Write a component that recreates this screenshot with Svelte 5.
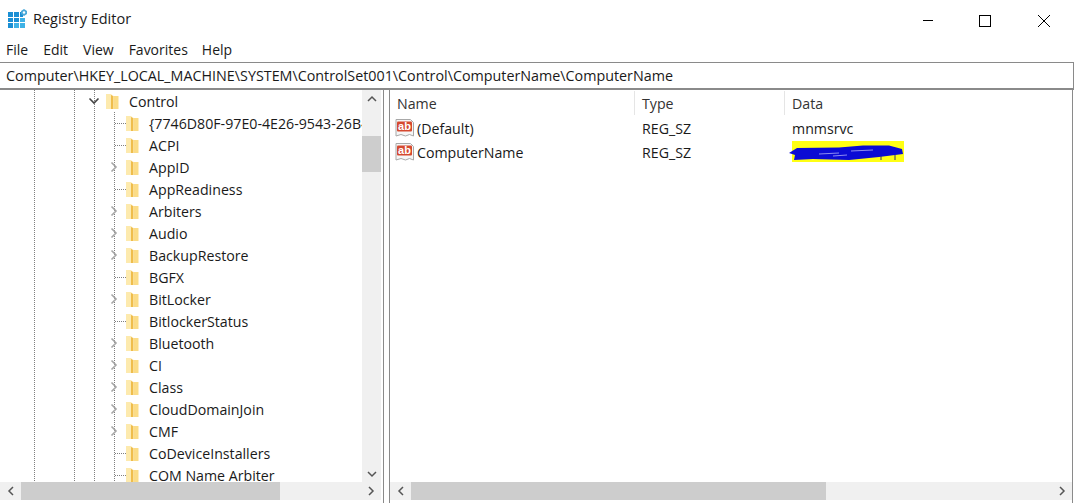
<script lang="ts">
  const items = [
    { name: "{7746D80F-97E0-4E26-9543-26B41FC22F79}", kids: false },
    { name: "ACPI", kids: false },
    { name: "AppID", kids: true },
    { name: "AppReadiness", kids: false },
    { name: "Arbiters", kids: true },
    { name: "Audio", kids: true },
    { name: "BackupRestore", kids: true },
    { name: "BGFX", kids: false },
    { name: "BitLocker", kids: true },
    { name: "BitlockerStatus", kids: false },
    { name: "Bluetooth", kids: true },
    { name: "CI", kids: true },
    { name: "Class", kids: true },
    { name: "CloudDomainJoin", kids: true },
    { name: "CMF", kids: true },
    { name: "CoDeviceInstallers", kids: false },
    { name: "COM Name Arbiter", kids: false },
  ];
  const values = [
    { name: "(Default)", type: "REG_SZ", data: "mnmsrvc" },
    { name: "ComputerName", type: "REG_SZ", data: "" },
  ];
  const menus = ["File", "Edit", "View", "Favorites", "Help"];
</script>

{#snippet folder()}
  <svg class="folder" viewBox="0 0 13 16" width="13" height="16">
    <path d="M0 1h5l1 1v14H0z" fill="#fdeaae" />
    <path d="M5 2l2.500 1v13H5z" fill="#efbd4c" />
    <path d="M7.500 3H12.500v13H7.500z" fill="#fbdc86" />
  </svg>
{/snippet}

{#snippet regIcon()}
  <svg class="reg" viewBox="0 0 19 20" width="19" height="20">
    <path d="M1 1.500h14.500l3 3v13.500l-4-1.500-4 1.500-4.500-1.500-5 1.500z" fill="#f6f6f6" stroke="#a8a8a8" />
    <rect x="2" y="3.500" width="15" height="10" rx="1" fill="#d5492f" />
    <text x="9.500" y="12" class="ab">ab</text>
  </svg>
{/snippet}

<div class="window">
  <header class="title">
    <svg class="logo" viewBox="0 0 20 20" width="20" height="20">
      <g fill="#1b8fd4">
        <rect x="0" y="4" width="5" height="5" />
        <rect x="6" y="4" width="5" height="5" />
        <rect x="12" y="4" width="3" height="5" />
        <rect x="0" y="10" width="5" height="4" />
        <rect x="6" y="10" width="5" height="4" />
        <rect x="12" y="10" width="5" height="4" fill="#3fb2e6" />
        <rect x="0" y="15" width="5" height="5" />
        <rect x="6" y="15" width="5" height="5" fill="#3fb2e6" />
        <rect x="12" y="15" width="5" height="5" fill="#3fb2e6" />
      </g>
      <path d="M16 1l3 2v3l-3 2-3-2V3z" fill="#4aa8d8" />
      <circle cx="16" cy="4.500" r="1.200" fill="#fff" />
    </svg>
    <span class="title-text">Registry Editor</span>
    <div class="controls">
      <svg viewBox="0 0 46 30" width="46" height="30"><path d="M18 17.500h10" stroke="#000" /></svg>
      <svg viewBox="0 0 46 30" width="46" height="30"><rect x="16.500" y="12.500" width="11" height="11" fill="none" stroke="#000" /></svg>
      <svg viewBox="0 0 46 30" width="46" height="30"><path d="M17 12l12 12M29 12L17 24" stroke="#000" fill="none" /></svg>
    </div>
  </header>

  <nav class="menu">
    {#each menus as m}
      <span>{m}</span>
    {/each}
  </nav>

  <div class="address">Computer\HKEY_LOCAL_MACHINE\SYSTEM\ControlSet001\Control\ComputerName\ComputerName</div>

  <main class="panes">
    <section class="tree-pane">
      <div class="tree-top">
        <div class="tree">
          <div class="row parent">
            <svg class="chev" viewBox="0 0 12 12" width="12" height="12"><path d="M1.500 3.500L6 8l4.500-4.500" fill="none" stroke="#444" stroke-width="1.600" /></svg>
            {@render folder()}
            <span class="label">Control</span>
          </div>
          {#each items as it}
            <div class="row child">
              {#if it.kids}
                <svg class="chev" viewBox="0 0 12 12" width="12" height="12"><path d="M3.500 1.500L8 6l-4.500 4.500" fill="none" stroke="#a6a6a6" stroke-width="1.600" /></svg>
              {:else}
                <span class="stub"></span>
              {/if}
              {@render folder()}
              <span class="label">{it.name}</span>
            </div>
          {/each}
        </div>
        <div class="vbar">
          <button class="sb-btn" aria-label="Scroll up"><svg viewBox="0 0 10 8" width="10" height="8"><path d="M1 6l4-4 4 4" fill="none" stroke="#555" stroke-width="1.500" /></svg></button>
          <div class="vtrack"><div class="vthumb"></div></div>
          <button class="sb-btn" aria-label="Scroll down"><svg viewBox="0 0 10 8" width="10" height="8"><path d="M1 2l4 4 4-4" fill="none" stroke="#555" stroke-width="1.500" /></svg></button>
        </div>
      </div>
      <div class="hbar">
        <button class="sb-btn h" aria-label="Scroll left"><svg viewBox="0 0 8 10" width="8" height="10"><path d="M6 1L2 5l4 4" fill="none" stroke="#555" stroke-width="1.500" /></svg></button>
        <div class="htrack"><div class="hthumb left"></div></div>
        <button class="sb-btn h" aria-label="Scroll right"><svg viewBox="0 0 8 10" width="8" height="10"><path d="M2 1l4 4-4 4" fill="none" stroke="#555" stroke-width="1.500" /></svg></button>
      </div>
    </section>

    <section class="list-pane">
      <div class="list">
        <div class="heads">
          <span class="h-name">Name</span>
          <span class="h-type">Type</span>
          <span class="h-data">Data</span>
        </div>
        {#each values as v}
          <div class="value">
            <span class="c-name">{@render regIcon()}{v.name}</span>
            <span class="c-type">{v.type}</span>
            <span class="c-data">
              {#if v.data}
                {v.data}
              {:else}
                <svg class="scribble" viewBox="0 0 116 24" width="116" height="24">
                  <rect x="3" y="1" width="112" height="21" fill="#ffff14" />
                  <path d="M0 13L8 8 50 7.500 74 5.500 100 5.500 113 9 114 14 90 17 60 20 24 19 5 20 6 15z" fill="#0b0bd4" />
                  <path d="M30 14l20-1M62 11l22-1M44 16l14-1" stroke="#8c8cf0" fill="none" />
                  <path d="M92 16v4M106 15v5" stroke="#33336e" fill="none" />
                </svg>
              {/if}
            </span>
          </div>
        {/each}
      </div>
      <div class="hbar">
        <button class="sb-btn h" aria-label="Scroll left"><svg viewBox="0 0 8 10" width="8" height="10"><path d="M6 1L2 5l4 4" fill="none" stroke="#555" stroke-width="1.500" /></svg></button>
        <div class="htrack"><div class="hthumb right"></div></div>
        <button class="sb-btn h" aria-label="Scroll right"><svg viewBox="0 0 8 10" width="8" height="10"><path d="M2 1l4 4-4 4" fill="none" stroke="#555" stroke-width="1.500" /></svg></button>
      </div>
    </section>
  </main>
</div>

<style>
  :global(body) {
    margin: 0;
    background: #fff;
  }
  .window {
    width: 1074px;
    height: 503px;
    overflow: hidden;
    display: flex;
    flex-direction: column;
    font-family: "Open Sans", "Noto Sans", sans-serif;
    font-size: 14px;
    color: #1a1a1a;
    background: #fff;
  }
  .title {
    height: 36px;
    flex: none;
    display: flex;
    align-items: center;
    padding-left: 8px;
  }
  .logo {
    margin-right: 5px;
  }
  .title-text {
    font-size: 14.500px;
  }
  .controls {
    margin-left: auto;
    display: flex;
    padding-right: 7px;
    margin-top: -1px;
  }
  .controls svg {
    margin-left: 12px;
  }
  .menu {
    height: 26px;
    flex: none;
    display: flex;
    align-items: center;
    gap: 15px;
    padding-left: 6px;
    font-size: 14px;
  }
  .menu span:last-child {
    margin-left: -1px;
  }
  .address {
    height: 25px;
    flex: none;
    line-height: 26px;
    padding-left: 6px;
    border-top: 1px solid #8a8a8a;
    border-bottom: 2px solid #8a8a8a;
    border-right: 1px solid #8a8a8a;
    font-size: 14.320px;
    white-space: nowrap;
  }
  .panes {
    flex: 1;
    min-height: 0;
    display: flex;
  }
  .tree-pane {
    width: 381px;
    flex: none;
    display: flex;
    flex-direction: column;
    padding-right: 2px;
    border-right: 1px solid #8a8a8a;
  }
  .tree-top {
    flex: 1;
    min-height: 0;
    display: flex;
  }
  .tree {
    flex: 1;
    min-width: 0;
    overflow: hidden;
    background-image:
      repeating-linear-gradient(to bottom, #808080 0 1px, transparent 1px 2px),
      repeating-linear-gradient(to bottom, #808080 0 1px, transparent 1px 2px),
      repeating-linear-gradient(to bottom, #808080 0 1px, transparent 1px 2px),
      repeating-linear-gradient(to bottom, #808080 0 1px, transparent 1px 2px);
    background-size: 1px 100%, 1px 100%, 1px 100%, 1px 100%;
    background-position: 34px 0, 74px 0, 94px 0, 114px 22px;
    background-repeat: no-repeat;
  }
  .row {
    height: 22px;
    display: flex;
    align-items: center;
    white-space: nowrap;
    font-size: 14.200px;
  }
  .parent {
    padding-left: 88px;
  }
  .child {
    padding-left: 108px;
  }
  .chev {
    width: 12px;
    flex: none;
  }
  .stub {
    width: 12px;
    flex: none;
    height: 1px;
    background: repeating-linear-gradient(to right, #808080 0 1px, transparent 1px 2px);
    margin-left: 7px;
    margin-right: -7px;
  }
  .folder {
    margin: 0 10px 0 6px;
    flex: none;
  }
  .vbar {
    width: 19px;
    flex: none;
    display: flex;
    flex-direction: column;
    background: #f0f0f0;
  }
  .sb-btn {
    border: none;
    padding: 0;
    background: #f0f0f0;
    width: 19px;
    height: 17px;
    flex: none;
    display: flex;
    align-items: center;
    justify-content: center;
  }
  .vtrack {
    flex: 1;
    padding-top: 29px;
  }
  .vthumb {
    height: 36px;
    background: #cdcdcd;
  }
  .hbar {
    height: 18px;
    flex: none;
    display: flex;
    background: #f0f0f0;
    margin-bottom: 3px;
  }
  .sb-btn.h {
    width: 21px;
    height: 18px;
  }
  .htrack {
    flex: 1;
    min-width: 0;
  }
  .hthumb {
    height: 18px;
    background: #cdcdcd;
  }
  .hthumb.left {
    width: 259px;
  }
  .hthumb.right {
    width: 415px;
  }
  .list-pane {
    flex: 1;
    min-width: 0;
    display: flex;
    flex-direction: column;
    margin-left: 5px;
    margin-right: 1px;
    border-left: 1px solid #8a8a8a;
    border-right: 1px solid #8a8a8a;
  }
  .list {
    flex: 1;
    min-height: 0;
  }
  .heads {
    height: 26px;
    display: flex;
    align-items: center;
    font-size: 14.200px;
    color: #333;
  }
  .heads span {
    box-sizing: border-box;
    border-right: 1px solid #e5e5e5;
    height: 24px;
    line-height: 26px;
    padding-left: 7px;
  }
  .h-name {
    width: 245px;
  }
  .h-type {
    width: 150px;
  }
  .h-data {
    flex: 1;
    border-right: none !important;
  }
  .value {
    height: 24px;
    display: flex;
    align-items: center;
    font-size: 14.200px;
  }
  .c-name {
    width: 245px;
    padding-left: 5px;
    box-sizing: border-box;
    display: flex;
    align-items: center;
    gap: 3px;
  }
  .c-type {
    width: 150px;
    padding-left: 7px;
    box-sizing: border-box;
  }
  .c-data {
    padding-left: 7px;
    display: flex;
    align-items: center;
  }
  .ab {
    font-family: "Liberation Sans", sans-serif;
    font-size: 11px;
    font-weight: bold;
    fill: #fff;
    text-anchor: middle;
  }
  .scribble {
    margin-left: -3px;
    flex: none;
  }
</style>
